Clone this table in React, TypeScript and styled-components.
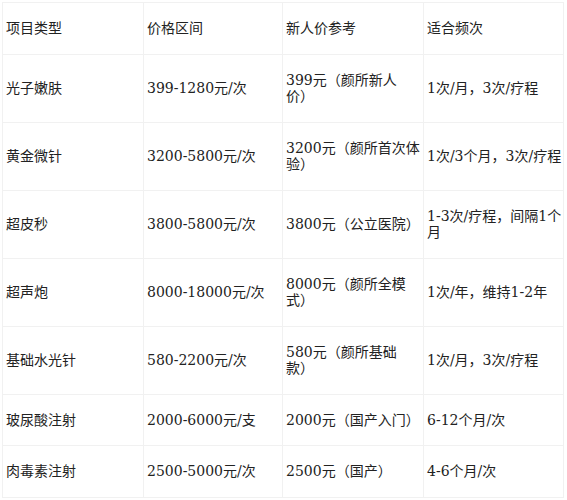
import React from 'react';
import styled, { createGlobalStyle } from 'styled-components';

const GlobalStyle = createGlobalStyle`
  body {
    margin: 2px;
    background: #ffffff;
  }
`;

const Table = styled.table`
  width: 561px;
  table-layout: fixed;
  border-collapse: collapse;
  font-family: 'DejaVu Serif', 'Noto Sans CJK SC', serif;
  font-size: 14px;
  line-height: 16.5px;
  color: #222222;
  text-spacing-trim: space-all;
`;

const Cell = styled.td`
  padding: 17px 1px 17px 3px;
  border: 1px solid #f1f1f1;
  vertical-align: middle;
  text-align: left;
  font-weight: normal;
  word-break: break-all;
`;

const HeadCell = styled(Cell).attrs({ as: 'th' })``;

const widths = [141, 139, 141, 140];

const header = ['项目类型', '价格区间', '新人价参考', '适合频次'];

const rows: string[][] = [
  ['光子嫩肤', '399-1280元/次', '399元（颜所新人价）', '1次/月，3次/疗程'],
  ['黄金微针', '3200-5800元/次', '3200元（颜所首次体验）', '1次/3个月，3次/疗程'],
  ['超皮秒', '3800-5800元/次', '3800元（公立医院）', '1-3次/疗程，间隔1个月'],
  ['超声炮', '8000-18000元/次', '8000元（颜所全模式）', '1次/年，维持1-2年'],
  ['基础水光针', '580-2200元/次', '580元（颜所基础款）', '1次/月，3次/疗程'],
  ['玻尿酸注射', '2000-6000元/支', '2000元（国产入门）', '6-12个月/次'],
  ['肉毒素注射', '2500-5000元/次', '2500元（国产）', '4-6个月/次'],
];

export default function App() {
  return (
    <>
      <GlobalStyle />
      <Table>
        <colgroup>
          {widths.map((w, i) => (
            <col key={i} style={{ width: w }} />
          ))}
        </colgroup>
        <thead>
          <tr>
            {header.map((h) => (
              <HeadCell key={h}>{h}</HeadCell>
            ))}
          </tr>
        </thead>
        <tbody>
          {rows.map((r) => (
            <tr key={r[0]}>
              {r.map((c, i) => (
                <Cell key={i}>{c}</Cell>
              ))}
            </tr>
          ))}
        </tbody>
      </Table>
    </>
  );
}
